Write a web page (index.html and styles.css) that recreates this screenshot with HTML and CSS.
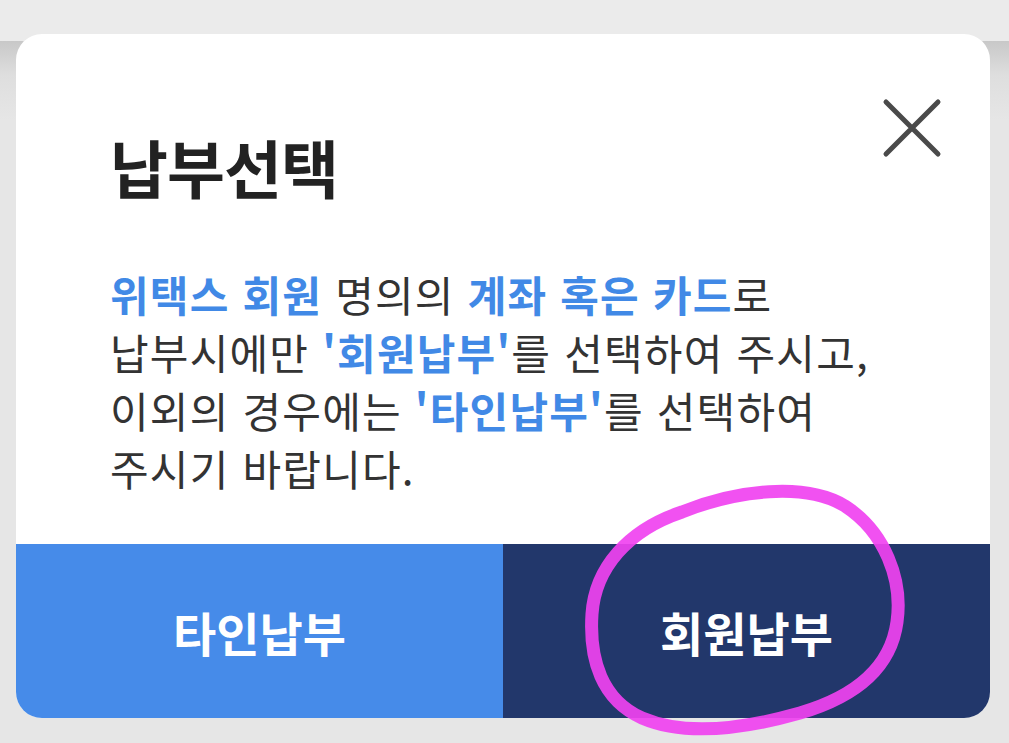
FILE: index.html
```html
<!DOCTYPE html>
<html lang="ko">

<head>
    <meta charset="UTF-8">
    <meta name="viewport" content="width=device-width, initial-scale=1.0">
    <title>납부선택</title>
    <link rel="stylesheet" href="styles.css">
</head>

<body>
    <div class="sheet">
        <div class="sheet-body">
            <div class="sheet-head">
                <h2 class="heading">납부선택</h2>
                <button class="close" aria-label="닫기">
                    <svg width="60" height="60" viewBox="0 0 60 60">
                        <path d="M4 4 L56 56 M56 4 L4 56" stroke="#4a4a4a" stroke-width="5" stroke-linecap="round" fill="none"/>
                    </svg>
                </button>
            </div>
            <p class="desc">
                <b>위택스 회원</b> 명의의 <b>계좌 혹은 카드</b>로<br>
                납부시에만 <b>'회원납부'</b>를 선택하여 주시고,<br>
                이외의 경우에는 <b>'타인납부'</b>를 선택하여<br>
                주시기 바랍니다.
            </p>
        </div>
        <div class="actions">
            <button class="btn btn-other">타인납부</button>
            <button class="btn btn-member">회원납부</button>
        </div>
    </div>

    <!-- pen mark drawn over the member button -->
    <svg class="mark" width="1009" height="743" viewBox="0 0 1009 743">
        <path d="M682 512 C737 490 805 482 845 506 C885 532 903 580 897 622 C891 666 858 696 800 713 C740 730 684 736 642 718 C602 700 589 660 592 614 C595 568 628 530 682 512 Z"
              stroke="rgb(240, 66, 240)" stroke-opacity="0.92" stroke-width="13" fill="none" stroke-linejoin="round"/>
    </svg>
</body>

</html>
```

FILE: styles.css
```css
* {
    margin: 0;
    padding: 0;
    box-sizing: border-box;
}

body {
    width: 1009px;
    height: 743px;
    overflow: hidden;
    position: relative;
    font-family: "Noto Sans CJK KR", "Noto Sans", sans-serif;
    background: linear-gradient(#ebebeb 0, #ebebeb 41px, #c8c8c8 41px, #dedede 75px, #e6e6e6 120px, #e6e6e6 100%);
}

.sheet {
    margin: 34px 0 0 16px;
    width: 974px;
    height: 684px;
    background-color: #ffffff;
    border-radius: 26px;
    overflow: hidden;
    display: flex;
    flex-direction: column;
}

.sheet-body {
    flex: 1;
    padding: 66px 48px 0 94px;
}

.sheet-head {
    display: flex;
    justify-content: space-between;
    align-items: flex-start;
}

.heading {
    margin-top: 26px;
    font-size: 63px;
    font-weight: 700;
    line-height: 80px;
    letter-spacing: -1px;
    color: #222222;
}

.close {
    margin-top: -2px;
    background: none;
    border: none;
    width: 60px;
    height: 60px;
}

.desc {
    margin-top: 59px;
    font-size: 42px;
    line-height: 58px;
    color: #333333;
    letter-spacing: 1.2px;
}

.desc b {
    color: #4189e6;
    font-weight: 700;
}

.actions {
    display: grid;
    grid-template-columns: 487px 487px;
    height: 174px;
}

.btn {
    border: none;
    font-family: inherit;
    font-size: 47px;
    font-weight: 700;
    color: #ffffff;
}

.btn-other {
    background-color: #468be9;
}

.btn-member {
    background-color: #22376b;
}

.mark {
    position: absolute;
    left: 0;
    top: 0;
    pointer-events: none;
}
```
